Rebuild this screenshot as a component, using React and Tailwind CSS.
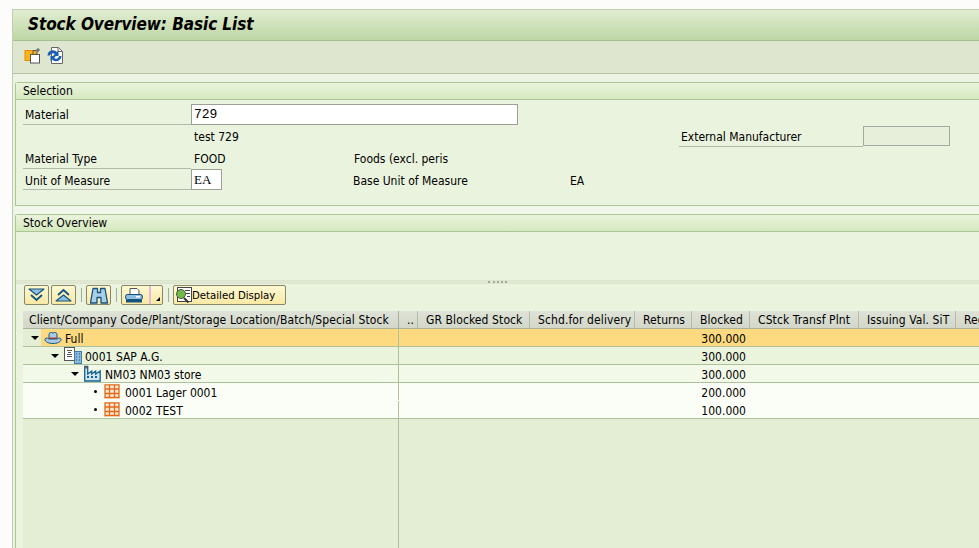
import React from "react";

const font = "font-['DejaVu_Sans',sans-serif] font-stretch-condensed";

const columns = [
  { label: "..", width: "w-[19px]" },
  { label: "GR Blocked Stock", width: "w-[112px]" },
  { label: "Schd.for delivery", width: "w-[105px]" },
  { label: "Returns", width: "w-[57px]" },
  { label: "Blocked", width: "w-[58px]" },
  { label: "CStck Transf Plnt", width: "w-[109px]" },
  { label: "Issuing Val. SiT", width: "w-[97px]" },
  { label: "Rec", width: "w-[40px]" },
];

const CopyIcon = () => (
  <svg width="17" height="17" viewBox="0 0 17 17" className="shrink-0">
    <rect x="1" y="3.5" width="11" height="10" fill="#fdb515" stroke="#e8890c" />
    <rect x="6.5" y="7.5" width="9" height="8.5" fill="#fff" stroke="#555" />
    <path d="M9 7V3.500h3l1 1V7" fill="none" stroke="#555" />
    <path d="M14 1v4M12 3h4" stroke="#555" />
  </svg>
);

const RefreshIcon = () => (
  <svg width="17" height="17" viewBox="0 0 17 17" className="shrink-0">
    <path d="M4.500.5h7l4 4v12h-11z" fill="#fff" stroke="#666" />
    <path d="M11 .5v4h4.500" fill="none" stroke="#666" />
    <path d="M.5 8.500a5.500 5.500 0 0 1 9.500-3.500l1.500-1.500V9H6l1.800-1.800A2.800 2.800 0 0 0 3 8.500z" fill="#1a5fb4" />
    <path d="M14.500 9a5.500 5.500 0 0 1-9.500 3.500L3.500 14V9H9l-1.800 1.800A2.800 2.800 0 0 0 12 9z" fill="#1a5fb4" />
  </svg>
);

const ArrowDown = () => (
  <svg width="17" height="14" viewBox="0 0 17 14">
    <path d="M1 1h15L8.500 7z" fill="#8fc0e0" stroke="#14527f" strokeWidth="1.200" strokeLinejoin="round" />
    <path d="M3 7l5.500 5L14 7" fill="none" stroke="#14527f" strokeWidth="1.800" />
  </svg>
);

const ArrowUp = () => (
  <svg width="17" height="14" viewBox="0 0 17 14">
    <path d="M3 7l5.500-5L14 7" fill="none" stroke="#14527f" strokeWidth="1.800" />
    <path d="M1 13h15L8.500 7z" fill="#8fc0e0" stroke="#14527f" strokeWidth="1.200" strokeLinejoin="round" />
  </svg>
);

const Binoculars = () => (
  <svg width="18" height="17" viewBox="0 0 18 17">
    <path d="M3 1.500h4.500v4h3v-4H15l2.500 14.500h-6.500V10.500H7V16H.5z" fill="#a9cfe8" stroke="#14527f" strokeWidth="1.300" strokeLinejoin="round" />
  </svg>
);

const Printer = () => (
  <svg width="18" height="15" viewBox="0 0 18 15">
    <path d="M5 .5h7l2 2v5H5z" fill="#fff" stroke="#555" />
    <rect x=".7" y="6.500" width="16.600" height="5" rx="1.500" fill="#8fc0e0" stroke="#14527f" />
    <rect x="1" y="11.500" width="16" height="3" fill="#14527f" />
    <rect x="11" y="8" width="4" height="1.500" fill="#fff" />
  </svg>
);

const DetailIcon = () => (
  <svg width="18" height="17" viewBox="0 0 18 17" className="shrink-0">
    <rect x="3.500" y=".5" width="14" height="14" fill="#fff" stroke="#444" />
    <path d="M11 3.500h5M12 6.500h4M13 9.500h3" stroke="#444" />
    <circle cx="7" cy="7" r="4.500" fill="#6dbb45" stroke="#555" />
    <path d="M10 11l4.500 4.500" stroke="#333" strokeWidth="2" />
  </svg>
);

const HatIcon = () => (
  <svg width="18" height="14" viewBox="0 0 18 14">
    <path d="M5 7V3.500C5 1.500 7 1 9 2c2-1 4-.5 4 1.500V7" fill="#a9cce4" stroke="#14527f" />
    <path d="M5 6.500h8v2H5z" fill="#d8322a" />
    <path d="M5 8c-2-1.500-4-1-4 .5C1 11 5 12.500 9 12.500S17 11 17 8.500c0-1.500-2-2-4-.5z" fill="#a9cce4" stroke="#14527f" />
  </svg>
);

const BuildingIcon = () => (
  <svg width="18" height="18" viewBox="0 0 18 18">
    <rect x=".5" y=".5" width="10" height="13" fill="#fff" stroke="#555" />
    <path d="M3 3.500h5M4 5.500h3M3 7.500h5M3 9.500h5" stroke="#555" />
    <rect x="10.500" y="4.500" width="7" height="12" fill="#8fb8d8" stroke="#3d7cab" />
    <path d="M12 7h1M15 7h1M12 10h1M15 10h1M12 13h1M15 13h1" stroke="#14527f" />
  </svg>
);

const FactoryIcon = () => (
  <svg width="17" height="17" viewBox="0 0 17 17">
    <path d="M.7 16V1.500h3V9l4-3v3l4-3v3l4.500-3V16z" fill="#cfe3f1" stroke="#14628f" strokeWidth="1.300" />
    <rect x="1.500" y="1.500" width="1.500" height="2" fill="#d8322a" />
    <path d="M3 12h2M7 12h2M11 12h2" stroke="#14628f" strokeWidth="2" />
  </svg>
);

const ShelfIcon = () => (
  <svg width="16" height="15" viewBox="0 0 16 15">
    <path d="M1 14.500V.8h14v13.700M1 5h14M1 9.500h14M1 13.500h14M5.500.8v13M10.500.8v13" fill="#fbe9d2" stroke="#e2691c" strokeWidth="1.300" />
  </svg>
);

const Caret = () => (
  <span className="block w-0 h-0 border-x-[4px] border-x-transparent border-t-[4px] border-t-black" />
);

const Dot = () => <span className="block w-[3px] h-[3px] bg-black rounded-full" />;

const ToolButton = ({ children, className = "" }) => (
  <button
    className={`h-[20px] flex items-center justify-center bg-gradient-to-b from-[#fdf8d2] to-[#f9e9a4] border border-[#8a8668] rounded-[2px] ${className}`}
  >
    {children}
  </button>
);

const Sep = () => <span className="w-px h-[14px] ml-[5px] mr-[4px] mt-[3px] bg-[#a7ad9b]" />;

const PanelHeader = ({ children }) => (
  <div className="h-[17px] pl-[7px] flex items-center text-black bg-gradient-to-b from-[#eaf4dc] to-[#d6e8bf] border-b border-[#abc596]">
    {children}
  </div>
);

const Label = ({ children, className = "w-[168px]" }) => (
  <div className={`h-full pl-[2px] pt-[2px] flex items-center border-b border-[#b3b8aa] ${className}`}>{children}</div>
);

const TreeRow = ({ indent, marker, icon, text, value, rowBg, bg, line = "border-[#adc29a]", gutter = "", textGap = "gap-[3px]" }) => (
  <div className={`h-[18px] flex border-b ${line} ${rowBg}`}>
    <div className={`w-[376px] shrink-0 flex h-full border-r border-[#adc29a] ${gutter}`}>
      <div className={`h-full flex items-center ${indent}`}>
        <span className="w-[12px] flex justify-center shrink-0">{marker}</span>
      </div>
      <div className={`flex-1 h-full flex items-center pl-[3px] ${textGap} ${bg || ""}`}>
        {icon}
        <span className="leading-none whitespace-nowrap pt-[2px]">{text}</span>
      </div>
    </div>
    <div className="ml-[297px] w-[50px] h-full pt-[2px] flex items-center justify-end">{value}</div>
  </div>
);

export default function App() {
  return (
    <div className={`w-[979px] h-[548px] overflow-hidden bg-[#fcfcfa] pl-[12px] pt-[9px] text-[12px] text-black ${font}`}>
      <div className="h-full border-l border-t border-[#c3cdb4] bg-[#edf3e3] flex flex-col">
        <div className="h-[31px] shrink-0 pl-[15px] flex items-center bg-gradient-to-b from-[#e1edd1] to-[#bdd6a4] border-b border-[#a8bf94]">
          <h1 className="text-[17px] font-bold italic tracking-[-0.08px]">Stock Overview: Basic List</h1>
        </div>

        <div className="h-[33px] shrink-0 pl-[11px] pb-[4px] flex items-center gap-[6px] bg-[#dfe6cf] border-b border-[#b6c2a4]">
          <CopyIcon />
          <RefreshIcon />
        </div>

        <div className="flex-1 min-h-0 pl-[2px] pt-[8px] flex flex-col">
          <section className="h-[124px] shrink-0 border-l border-t border-b border-[#abc596] rounded-tl-[3px] bg-[#eaf3dd]">
            <PanelHeader>Selection</PanelHeader>
            <div className="pl-[7px] pt-[4px] flex flex-col">
              <div className="h-[21px] flex items-stretch">
                <Label>Material</Label>
                <input
                  readOnly
                  value="729"
                  className="w-[327px] h-[21px] pl-[2px] bg-white border border-[#9b9f94] font-['Liberation_Mono',monospace] text-[13px] outline-none"
                />
              </div>
              <div className="h-[22px] flex items-center">
                <span className="ml-[171px] w-[485px] pt-[2px]">test 729</span>
                <Label className="w-[184px] h-[20px]">External Manufacturer</Label>
                <span className="w-[87px] h-[20px] border border-[#a5a99f] bg-[#e7efdb]" />
              </div>
              <div className="h-[22px] flex items-center">
                <Label className="w-[168px] h-[20px]">Material Type</Label>
                <span className="ml-[3px] w-[160px] pt-[2px]">FOOD</span>
                <span className="pt-[2px]">Foods (excl. peris</span>
              </div>
              <div className="h-[21px] flex items-center">
                <Label className="w-[168px] h-[21px] !pt-[3px]">Unit of Measure</Label>
                <span className="w-[31px] h-[21px] pl-[2px] flex items-center bg-white border border-[#9b9f94] font-['Liberation_Serif',serif] text-[13px]">EA</span>
                <span className="ml-[131px] w-[217px] pt-[2px]">Base Unit of Measure</span>
                <span className="pt-[2px]">EA</span>
              </div>
            </div>
          </section>

          <div className="h-[8px] shrink-0 bg-[#f1f6ea]" />

          <section className="flex-1 min-h-0 border-l border-t border-[#abc596] rounded-tl-[3px] bg-[#eaf3dd] flex flex-col">
            <PanelHeader>Stock Overview</PanelHeader>
            <div className="h-[48px] shrink-0" />
            <div className="h-[4px] shrink-0 flex items-center justify-center bg-[#e0e8d2] border-y border-[#dce4cd]">
              <span className="w-[19px] border-t-[2px] border-dotted border-[#a4a99b]" />
            </div>
            <div className="h-[27px] shrink-0 pl-[8px] pt-[1px] flex items-start">
              <ToolButton className="w-[25px]"><ArrowDown /></ToolButton>
              <ToolButton className="w-[25px] ml-[2px]"><ArrowUp /></ToolButton>
              <Sep />
              <ToolButton className="w-[25px]"><Binoculars /></ToolButton>
              <Sep />
              <ToolButton className="w-[42px] !justify-start pl-[3px] relative">
                <Printer />
                <span className="absolute right-[11px] top-0 bottom-0 w-[2px] bg-[#e4b9d9]" />
                <span className="absolute right-[2px] bottom-[3px] w-0 h-0 border-l-[4px] border-l-transparent border-b-[4px] border-b-black" />
              </ToolButton>
              <Sep />
              <ToolButton className="w-[113px] !justify-start pl-0">
                <DetailIcon />
                <span className="leading-none whitespace-nowrap text-[11.300px] pt-[2px]">Detailed Display</span>
              </ToolButton>
            </div>

            <div className="flex-1 min-h-0 ml-[7px] flex flex-col overflow-hidden">
              <div className="h-[18px] shrink-0 flex tracking-[0.1px] bg-gradient-to-b from-[#dfe3d7] to-[#d2d7c9] border-b border-[#a9b29b]">
                <div className="w-[376px] shrink-0 pl-[6px] flex items-center whitespace-nowrap border-r border-[#a8ad9e]">
                  Client/Company Code/Plant/Storage Location/Batch/Special Stock
                </div>
                {columns.map((column) => (
                  <div key={column.label} className={`${column.width} shrink-0 pl-[8px] flex items-center whitespace-nowrap border-r border-[#b5bbaa]`}>
                    {column.label}
                  </div>
                ))}
              </div>

              <TreeRow indent="pl-[6px]" marker={<Caret />} icon={<HatIcon />} text="Full" value="300.000" rowBg="bg-[#fdd97f]" gutter="bg-[#e3eed4]" bg="bg-[#fdd97f]" />
              <TreeRow indent="pl-[26px]" marker={<Caret />} icon={<BuildingIcon />} text="0001 SAP A.G." value="300.000" rowBg="bg-[#eaf4dd]" />
              <TreeRow indent="pl-[46px]" marker={<Caret />} icon={<FactoryIcon />} text="NM03 NM03 store" value="300.000" rowBg="bg-[#f2f9e8]" textGap="gap-[4px]" />
              <TreeRow indent="pl-[66px]" marker={<Dot />} icon={<ShelfIcon />} text="0001 Lager 0001" value="200.000" rowBg="bg-[#fbfef6]" line="border-transparent" textGap="gap-[5px]" />
              <TreeRow indent="pl-[66px]" marker={<Dot />} icon={<ShelfIcon />} text="0002 TEST" value="100.000" rowBg="bg-[#fbfef6]" textGap="gap-[5px]" />

              <div className="flex-1 flex bg-[#e3eed4]">
                <div className="w-[376px] shrink-0 border-r border-[#adc29a]" />
              </div>
            </div>
          </section>
        </div>
      </div>
    </div>
  );
}
